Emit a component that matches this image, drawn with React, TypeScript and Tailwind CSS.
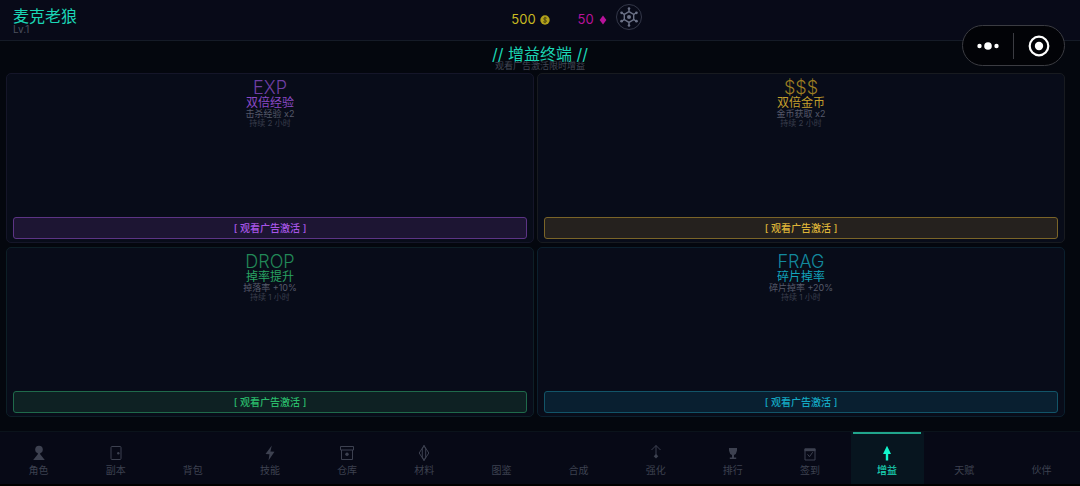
import type { ReactNode } from "react";
import clsx from "clsx";

type Boost = {
  code: string;
  name: string;
  desc: string;
  duration: string;
  card: string;
  codeColor: string;
  nameColor: string;
  button: string;
};

const boosts: Boost[] = [
  {
    code: "EXP",
    name: "双倍经验",
    desc: "击杀经验 x2",
    duration: "持续 2 小时",
    card: "border-[#151629]",
    codeColor: "text-[#6f3fa3]",
    nameColor: "text-[#8a49c6]",
    button: "border-[#5c3485] bg-[#1d1533] text-[#a855e8]",
  },
  {
    code: "$$$",
    name: "双倍金币",
    desc: "金币获取 x2",
    duration: "持续 2 小时",
    card: "border-[#181b20]",
    codeColor: "text-[#9c7d22]",
    nameColor: "text-[#c49f2c]",
    button: "border-[#7a6428] bg-[#25211e] text-[#deb438]",
  },
  {
    code: "DROP",
    name: "掉率提升",
    desc: "掉落率 +10%",
    duration: "持续 1 小时",
    card: "border-[#0d1f27]",
    codeColor: "text-[#228857]",
    nameColor: "text-[#28a362]",
    button: "border-[#1f6a4b] bg-[#0e2123] text-[#2abb6b]",
  },
  {
    code: "FRAG",
    name: "碎片掉率",
    desc: "碎片掉率 +20%",
    duration: "持续 1 小时",
    card: "border-[#0b202e]",
    codeColor: "text-[#13899e]",
    nameColor: "text-[#12a3bb]",
    button: "border-[#125468] bg-[#091f30] text-[#14a9c4]",
  },
];

const tabs: { label: string; icon?: ReactNode }[] = [
  {
    label: "角色",
    icon: (
      <g fill="currentColor" stroke="none">
        <circle cx="8" cy="4.5" r="3.8" />
        <path d="M6.8 7.5h2.4v1.8l4.6 5.7H2.2l4.6-5.7z" />
      </g>
    ),
  },
  {
    label: "副本",
    icon: (
      <>
        <rect x="3" y="1.5" width="10" height="13" rx="1" />
        <circle cx="10.3" cy="8.3" r="1.2" fill="currentColor" stroke="none" />
      </>
    ),
  },
  { label: "背包" },
  {
    label: "技能",
    icon: <path d="M9.8.5 3.5 9l4 .2L6.5 15.5 12.5 6.8l-4.1-.3z" fill="currentColor" stroke="none" />,
  },
  {
    label: "仓库",
    icon: (
      <>
        <path d="M2.5 5v9.5h11V5M1.5 1.5h13V5h-13z" />
        <circle cx="8" cy="9.2" r="1.7" fill="currentColor" stroke="none" />
      </>
    ),
  },
  {
    label: "材料",
    icon: <path d="M8 .5 12.8 8 8 15.5 3.2 8zM8 .5 6.3 4v8L8 15.5 9.7 12V4z" />,
  },
  { label: "图鉴" },
  { label: "合成" },
  {
    label: "强化",
    icon: (
      <>
        <path d="M8 12V.5M3.5 5 8 .5 12.5 5" />
        <path d="m8 9 2.3 2.3L8 13.6l-2.3-2.3z" fill="currentColor" stroke="none" />
      </>
    ),
  },
  {
    label: "排行",
    icon: (
      <path
        d="M4 3h8v2.5L10.8 9 9 10v2.5h2.2V14H4.8v-1.5H7V10L5.2 9 4 5.5z"
        fill="currentColor"
        stroke="none"
      />
    ),
  },
  {
    label: "签到",
    icon: (
      <>
        <path d="M3 4h10v11H3zM5.5 9.3l2 2.4 3.2-4.5" />
        <path d="M2.5 3.5h11v2.7h-11z" fill="currentColor" stroke="none" />
      </>
    ),
  },
  {
    label: "增益",
    icon: <path d="M8 .8 12 9H9.2v6.4H6.8V9H4z" fill="currentColor" stroke="none" />,
  },
  { label: "天赋" },
  { label: "伙伴" },
];

function CoinIcon() {
  return (
    <svg viewBox="0 0 10 10" className="size-[10px]" aria-hidden="true">
      <circle cx="5" cy="5" r="4.7" fill="#b3a21b" />
      <path
        d="M6.8 3.3C6.2 2.6 3.6 2.5 3.6 3.9S6.6 4.8 6.6 6.1 3.8 7.6 3.2 6.6M5 1.8v6.4"
        fill="none"
        stroke="#4b4310"
        strokeWidth="0.9"
      />
    </svg>
  );
}

function GemIcon() {
  return (
    <svg viewBox="0 0 10 10" className="size-[10px]" aria-hidden="true">
      <path d="M5 .6 8.4 5 5 9.4 1.6 5z" fill="#b8139a" />
    </svg>
  );
}

function SettingsIcon() {
  return (
    <svg viewBox="0 0 26 26" className="size-[26px]" fill="none" stroke="#6b7186" aria-hidden="true">
      <circle cx="13" cy="13" r="12.5" stroke="#343849" />
      <path d="M13 7.6 17.7 10.3v5.4L13 18.4l-4.7-2.7v-5.4z" strokeWidth="1.4" />
      <path
        d="M13 7.6V4.5M13 18.4v3.1M8.3 10.3 6 9M17.7 10.3 20 9M8.3 15.7 6 17M17.7 15.7 20 17"
        strokeWidth="1.4"
      />
      <g fill="#6b7186" stroke="none">
        <circle cx="13" cy="13" r="2" />
        <circle cx="13" cy="4.5" r="1.3" />
        <circle cx="13" cy="21.5" r="1.3" />
        <circle cx="5.6" cy="8.8" r="1.4" />
        <circle cx="20.4" cy="8.8" r="1.4" />
        <circle cx="5.6" cy="17.2" r="1.4" />
        <circle cx="20.4" cy="17.2" r="1.4" />
      </g>
    </svg>
  );
}

function Capsule() {
  return (
    <div className="absolute top-[25px] right-[15px] z-10 flex h-[41px] w-[103px] items-center rounded-full border border-[#3b3c42] bg-[#020307]">
      <button type="button" aria-label="更多" className="flex h-full flex-1 items-center justify-center">
        <svg viewBox="0 0 24 10" className="h-[10px] w-6" fill="#fff" aria-hidden="true">
          <circle cx="3.5" cy="5" r="2.2" />
          <circle cx="12" cy="5" r="3.8" />
          <circle cx="20.5" cy="5" r="2.2" />
        </svg>
      </button>
      <span className="h-[26px] w-px bg-[#3b3c42]" />
      <button type="button" aria-label="关闭" className="flex h-full flex-1 items-center justify-center">
        <svg viewBox="0 0 22 22" className="size-[22px]" aria-hidden="true">
          <circle cx="11" cy="11" r="9.3" fill="none" stroke="#fff" strokeWidth="2.2" />
          <circle cx="11" cy="11" r="4.2" fill="#fff" />
        </svg>
      </button>
    </div>
  );
}

function BoostCard({ boost }: { boost: Boost }) {
  return (
    <article
      className={clsx(
        "flex flex-col items-center rounded-[5px] border bg-[#080c19] px-1.5 pt-[5px] pb-[3px]",
        boost.card,
      )}
    >
      <div className={clsx("text-[18px] leading-[18px] font-light", boost.codeColor)}>{boost.code}</div>
      <h2 className={clsx("text-[12px] leading-[12px]", boost.nameColor)}>{boost.name}</h2>
      <p className="text-[9px] leading-[9px] text-[#555969]">{boost.desc}</p>
      <p className="text-[8px] leading-[10px] text-[#3a3e4d]">{boost.duration}</p>
      <button
        type="button"
        className={clsx("mt-auto h-[22px] w-full rounded-[3px] border text-[10px] leading-[20px] font-medium", boost.button)}
      >
        [ 观看广告激活 ]
      </button>
    </article>
  );
}

export default function App() {
  return (
    <div className="relative flex min-h-screen flex-col bg-[#04070e] font-[Inter,'Noto_Sans_CJK_SC',sans-serif]">
      <header className="flex h-[41px] border-b border-[#151b27] bg-[#080a18] pl-[13px]">
        <div className="w-[46.7%] pt-2">
          <div className="text-[16px] leading-[16px] text-[#1bd6b6]">麦克老狼</div>
          <div className="text-[10px] leading-[10px] text-[#4b4f5e]">Lv.1</div>
        </div>
        <div className="flex text-[13px]">
          <div className="flex items-center gap-1 text-[#c9ba22]">
            500 <CoinIcon />
          </div>
          <div className="ml-7 flex items-center gap-1 text-[#b8139a]">
            50 <GemIcon />
          </div>
          <button type="button" aria-label="设置" className="mt-1 ml-2 self-start">
            <SettingsIcon />
          </button>
        </div>
      </header>
      <Capsule />

      <main className="flex flex-1 flex-col pt-[5px] pb-3.5">
        <h1 className="text-center text-[16px] leading-[16px] text-[#1bd6b6]">// 增益终端 //</h1>
        <p className="mb-[3px] text-center text-[9px] leading-[8px] text-[#424654]">观看广告激活限时增益</p>
        <div className="grid flex-1 grid-cols-2 grid-rows-2 gap-x-[3px] gap-y-1 pr-[15px] pl-1.5">
          {boosts.map((boost) => (
            <BoostCard key={boost.code} boost={boost} />
          ))}
        </div>
      </main>

      <nav className="flex h-[55px] border-t border-b-2 border-t-[#0b131b] border-b-black bg-[#070916]">
        {tabs.map(({ label, icon }) => {
          const active = label === "增益";
          return (
            <a
              key={label}
              href="#"
              aria-current={active ? "page" : undefined}
              className={clsx(
                "mx-0.5 flex flex-1 flex-col items-center text-[10px] leading-[14px]",
                active ? "bg-[#07151f] font-medium text-[#1bd6b6]" : "text-[#3d4150]",
              )}
            >
              <span className={clsx("h-0.5 w-[68px] max-w-full", active && "bg-[#21a58c]")} />
              <svg
                viewBox="0 0 16 16"
                className={clsx("mt-[11px] mb-0.5 size-4", active && "text-[#12f5cc]")}
                fill="none"
                stroke="currentColor"
                aria-hidden="true"
              >
                {icon}
              </svg>
              {label}
            </a>
          );
        })}
      </nav>
    </div>
  );
}
